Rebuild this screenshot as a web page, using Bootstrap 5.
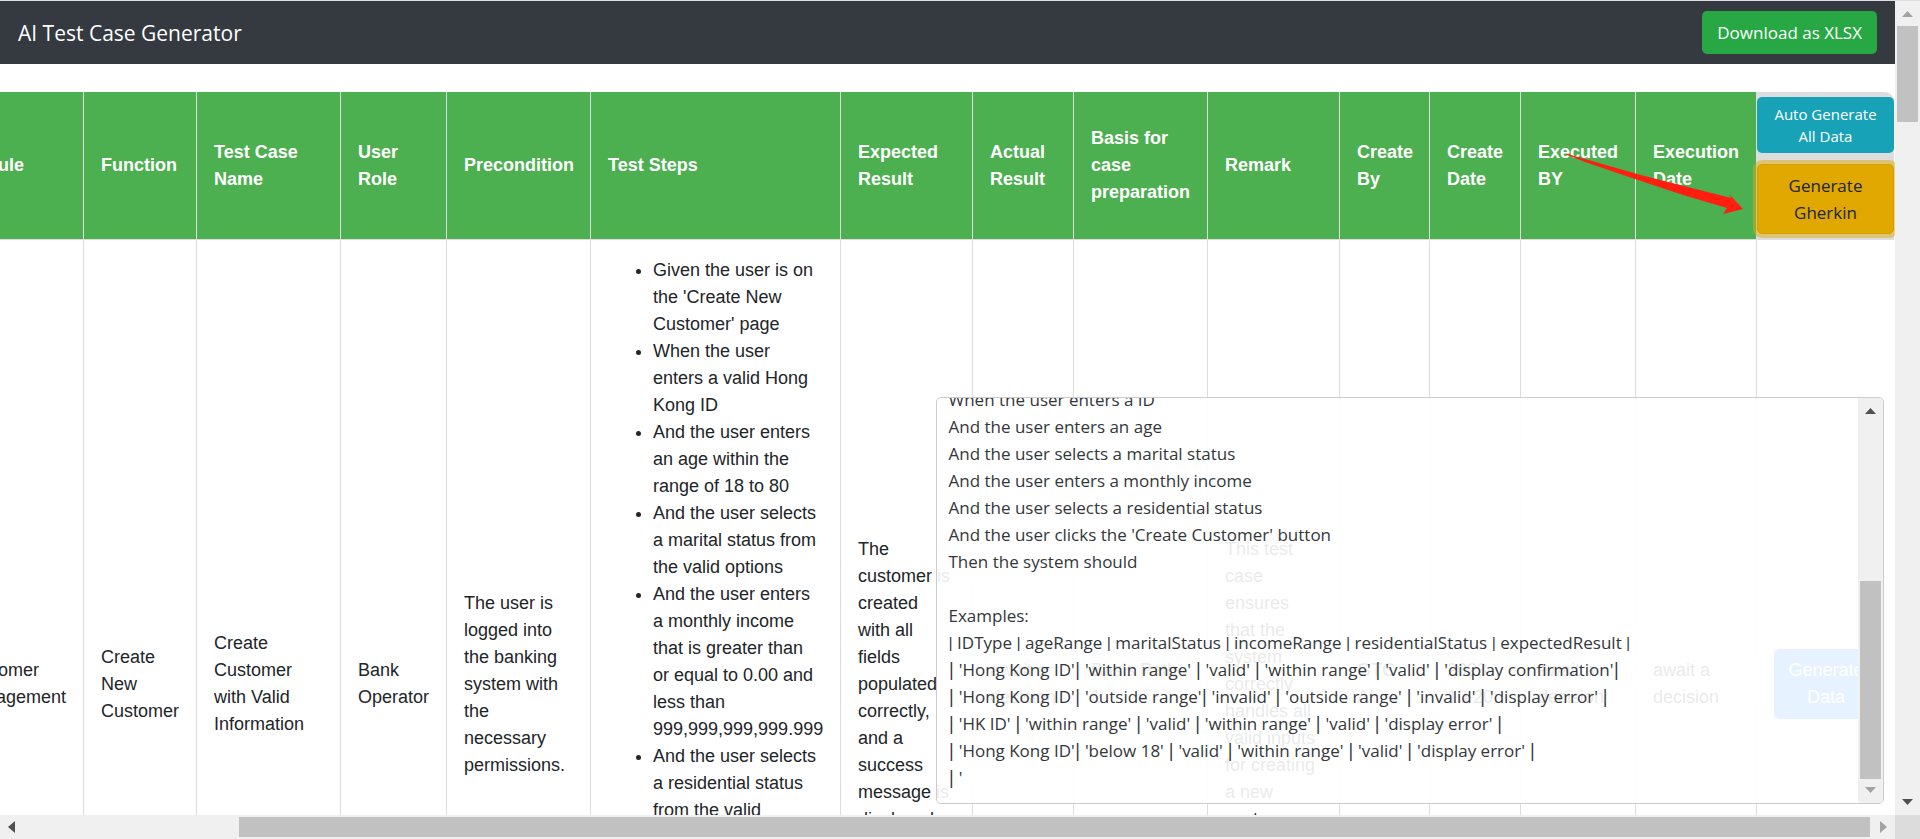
<!DOCTYPE html>
<html lang="en">
<head>
<meta charset="utf-8">
<meta name="viewport" content="width=device-width, initial-scale=1">
<title>AI Test Case Generator</title>
<link href="https://cdn.jsdelivr.net/npm/bootstrap@5.3.0/dist/css/bootstrap.min.css" rel="stylesheet">
<style>
  :root { --ui: "Segoe UI", "Open Sans", "Noto Sans", sans-serif; }
  body { font: 17px/27px var(--ui); color: #212529; }

  /* window: page area plus a scroll bar on the right and one below */
  .window { display: grid; grid-template: minmax(0, 1fr) 24px / minmax(0, 1fr) 25px; border-top: 1px solid #dcdfe1; }
  .track { background: #f0f0f0; display: flex; align-items: center; }
  .track svg { flex: none; display: block; }
  .track-y { flex-direction: column; padding: 10px 2px; }
  .track-x { padding: 2px 8px; }
  .thumb { background: #c1c1c1; }
  .track-y .thumb { width: 100%; }
  .track-x .thumb { height: 100%; }
  .corner { background: #dcdcdc; }

  .topbar { background: #343a40; padding: 10px 18px; min-height: 63px; }
  .topbar .navbar-brand { color: #fff; font-size: 21px; line-height: 33px; padding: 2px 0 0; }
  .btn { font-size: 17px; line-height: 27px; border-radius: 5px; color: #fff; }
  .btn-xlsx, .btn-xlsx:hover { background: #28a745; color: #fff; padding: 8px 15px; border: 0; }

  .sheet { padding: 28px 1px 0 0; }
  .case-table { flex: none; table-layout: fixed; width: 1950px; border-collapse: separate; border-spacing: 0;
                font: 18px/27px "Liberation Sans", Arial, sans-serif; }
  .case-table th, .case-table td { padding: 17px 16px 16px 17px; vertical-align: middle; border-right: 1px solid #ddd; border-bottom: 1px solid #ddd; }
  .case-table th { background: #4caf50; color: #fff; height: 148px; padding-top: 16px; }
  .case-table td { height: 888px; }
  .case-table th:last-child, .case-table td:last-child { border-right: 0; }
  .case-table th.tools { background: #ddd; padding: 0; border-top-right-radius: 9px; }
  .tool-stack { gap: 11px; }
  .steps { padding-left: 45px; margin: 0; }
  .btn-auto, .btn-auto:hover { background: #17a2b8; color: #fff; font: 15px/22px var(--ui); padding: 6px 12px; border: 0; }
  .btn-gherkin, .btn-gherkin:hover { background: #e0a800; color: #212529; border: 1px solid #d39e00; font-family: var(--ui); font-weight: 400;
                 padding: 7px 12px; box-shadow: 0 0 0 4px rgba(222, 170, 12, .5); }
  .btn-row, .btn-row:hover { background: #007bff; color: #fff; border: 0; font: 18px/27px "Liberation Sans", Arial, sans-serif; padding: 8px 6px; }

  .pointer { right: 152px; top: 90px; }

  .gherkin { right: 11px; bottom: 11px; width: calc(50% + 1px); height: 50%; border: 1px solid #ccc; border-radius: 5px;
             background: rgba(255, 255, 255, .9); overflow: hidden; }
  .gherkin pre { font: 17px/27px var(--ui); color: #33373b; padding: 0 0 12px 12px; margin: 0; flex: none; }
  /* column bars of the examples table: b in its header row, i in its data rows */
  .gherkin pre b { font: 17px/1 Roboto, sans-serif; }
  .gherkin pre i { font: 17px/1 "DejaVu Sans", sans-serif; }
</style>
</head>
<body>
<div class="window vh-100 overflow-hidden">
  <main class="position-relative overflow-hidden d-flex flex-column">
    <nav class="topbar navbar flex-nowrap justify-content-between flex-shrink-0">
      <a class="navbar-brand" href="#">AI Test Case Generator</a>
      <button type="button" class="btn btn-xlsx">Download as XLSX</button>
    </nav>

    <div class="sheet d-flex justify-content-end position-relative">
      <table class="case-table">
        <colgroup>
          <col style="width:140px"><col style="width:113px"><col style="width:144px"><col style="width:106px">
          <col style="width:144px"><col style="width:250px"><col style="width:132px"><col style="width:101px">
          <col style="width:134px"><col style="width:132px"><col style="width:90px"><col style="width:91px">
          <col style="width:115px"><col style="width:121px"><col style="width:137px">
        </colgroup>
        <thead>
          <tr>
            <th>Module</th><th>Function</th><th>Test Case Name</th><th>User Role</th><th>Precondition</th>
            <th>Test Steps</th><th>Expected Result</th><th>Actual Result</th><th>Basis for case preparation</th>
            <th>Remark</th><th>Create By</th><th>Create Date</th><th>Executed BY</th><th>Execution Date</th>
            <th class="tools">
              <div class="tool-stack d-grid">
                <button type="button" class="btn btn-auto">Auto Generate<br>All Data</button>
                <button type="button" class="btn btn-gherkin">Generate<br>Gherkin</button>
              </div>
            </th>
          </tr>
        </thead>
        <tbody>
          <tr>
            <td>Customer Management</td>
            <td>Create New Customer</td>
            <td>Create Customer with Valid Information</td>
            <td>Bank Operator</td>
            <td>The user is logged into the banking system with the necessary permissions.</td>
            <td class="align-top">
              <ul class="steps">
                <li>Given the user is on the 'Create New Customer' page</li>
                <li>When the user enters a valid Hong Kong ID</li>
                <li>And the user enters an age within the range of 18 to 80</li>
                <li>And the user selects a marital status from the valid options</li>
                <li>And the user enters a monthly income that is greater than or&nbsp;equal to 0.00 and less than 999,999,999,999.999</li>
                <li>And the user selects a residential status from the valid<br>options</li>
              </ul>
            </td>
            <td>The customer is created with&nbsp;all fields populated correctly, and a success message is displayed.</td>
            <td>await a decision</td>
            <td>Basis Path 1</td>
            <td>This test case ensures that the system correctly handles all valid inputs for creating a new customer.</td>
            <td>GTC AI</td>
            <td>2023-10-20</td>
            <td>await a decision</td>
            <td>await a decision</td>
            <td><div class="d-grid"><button type="button" class="btn btn-row">Generate Data</button></div></td>
          </tr>
        </tbody>
      </table>
      <svg class="pointer position-absolute" width="178" height="60" viewBox="0 0 178 60" aria-hidden="true">
        <path d="M0 0 Q2 -1 6 1 L72 20 L166 44 L164 40 L178 55 L158 60 L162 54 L118 41 L64 23 L20 8 Z" fill="#ff1e10"/>
      </svg>
    </div>

    <section class="gherkin position-absolute d-flex" aria-label="Generated Gherkin">
      <div class="flex-grow-1 overflow-hidden d-flex flex-column justify-content-end">
<pre>When the user enters a ID
And the user enters an age
And the user selects a marital status
And the user enters a monthly income
And the user selects a residential status
And the user clicks the 'Create Customer' button
Then the system should

Examples:
<b>|</b> IDType <b>|</b> ageRange <b>|</b> maritalStatus <b>|</b> incomeRange <b>|</b> residentialStatus <b>|</b> expectedResult <b>|</b>
<i>|</i> 'Hong Kong ID'<i>|</i> 'within range' <i>|</i> 'valid' <i>|</i> 'within range' <i>|</i> 'valid' <i>|</i> 'display confirmation'<i>|</i>
<i>|</i> 'Hong Kong ID'<i>|</i> 'outside range'<i>|</i> 'invalid' <i>|</i> 'outside range' <i>|</i> 'invalid' <i>|</i> 'display error' <i>|</i>
<i>|</i> 'HK ID' <i>|</i> 'within range' <i>|</i> 'valid' <i>|</i> 'within range' <i>|</i> 'valid' <i>|</i> 'display error' <i>|</i>
<i>|</i> 'Hong Kong ID'<i>|</i> 'below 18' <i>|</i> 'valid' <i>|</i> 'within range' <i>|</i> 'valid' <i>|</i> 'display error' <i>|</i>
<i>|</i> '</pre>
      </div>
      <div class="track track-y flex-shrink-0" style="width:25px">
        <svg width="11" height="6"><path d="M0 6 L5.500 0 L11 6Z" fill="#505050"/></svg>
        <div style="flex:167"></div>
        <div class="thumb" style="flex:198"></div>
        <svg class="mt-2" width="11" height="6"><path d="M0 0 L5.500 6 L11 0Z" fill="#a3a3a3"/></svg>
      </div>
    </section>
  </main>

  <div class="track track-y">
    <svg width="11" height="6"><path d="M0 6 L5.500 0 L11 6Z" fill="#a3a3a3"/></svg>
    <div style="flex:9"></div>
    <div class="thumb" style="flex:96"></div>
    <div style="flex:677"></div>
    <svg width="11" height="6"><path d="M0 0 L5.500 6 L11 0Z" fill="#505050"/></svg>
  </div>
  <div class="track track-x">
    <svg width="7" height="12"><path d="M7 0 L0 6 L7 12Z" fill="#505050"/></svg>
    <div style="flex:224"></div>
    <div class="thumb" style="flex:1631"></div>
    <div style="flex:10"></div>
    <svg width="7" height="12"><path d="M0 0 L7 6 L0 12Z" fill="#a3a3a3"/></svg>
  </div>
  <div class="corner"></div>
</div>
<script src="https://cdn.jsdelivr.net/npm/bootstrap@5.3.0/dist/js/bootstrap.bundle.min.js"></script>
</body>
</html>
